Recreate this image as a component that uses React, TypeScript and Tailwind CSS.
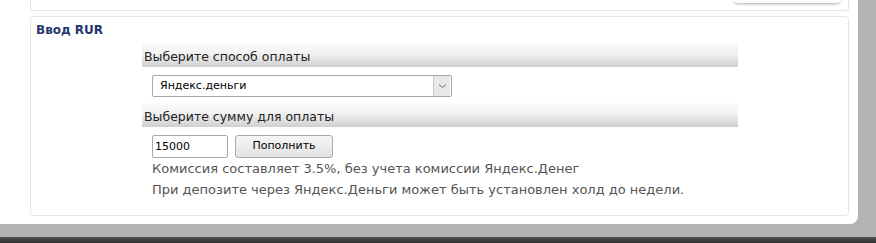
export default function App() {
  return (
    <div className="w-[876px] h-[243px] bg-[#b3b3b3] flex flex-col overflow-hidden" style={{ fontFamily: '"DejaVu Sans", Verdana, sans-serif' }}>
      <div className="w-[858px] h-[224px] bg-white rounded-br-[8px] pl-[30px] pr-[9px] overflow-hidden">
        {/* previous block, only its bottom is visible */}
        <div className="h-[11px] border-x border-b border-[#e6e6e6] rounded-b-[3px] flex justify-end pr-[8px]">
          <div className="w-[105px] h-[3px] rounded-b-[3px] bg-white shadow-[0_1px_3px_rgba(0,0,0,0.35)]" />
        </div>

        <div className="mt-[5px] h-[200px] border border-[#e6e6e6] rounded-[4px]">
          <div className="pl-[5px] pt-[6px] leading-[15px] text-[12px] font-bold text-[#22376b]">Ввод RUR</div>

          <div className="ml-[111px] mt-[5px] w-[596px]">
            <div className="h-[24px] bg-gradient-to-b from-[#fcfcfc] via-[#efefef] to-[#cfcfcf] pl-[2px] pt-[5px] text-[12.5px] leading-[17px] text-[#222]">
              Выберите способ оплаты
            </div>

            <div className="ml-[10px] mt-[8px] w-[300px] h-[22px] border border-[#a9a9a9] rounded-[2px] bg-white flex items-center">
              <span className="flex-1 pl-[7px] text-[11px] text-black">Яндекс.деньги</span>
              <div className="w-[17px] h-[20px] mr-[1px] bg-[#e8e8e8] border-l border-[#c8c8c8] flex items-center justify-center">
                <svg width="9" height="6" viewBox="0 0 9 6" fill="none">
                  <path d="M1 1.5 L4.5 4.5 L8 1.5" stroke="#666" strokeWidth="1" />
                </svg>
              </div>
            </div>

            <div className="mt-[6px] h-[24px] bg-gradient-to-b from-[#fcfcfc] via-[#efefef] to-[#cfcfcf] pl-[2px] pt-[5px] text-[12.5px] leading-[17px] text-[#222]">
              Выберите сумму для оплаты
            </div>

            <div className="ml-[10px] mt-[8px] flex gap-[7px]">
              <div className="w-[76px] h-[23px] border border-[#a9a9a9] rounded-[2px] bg-white pl-[2px] text-[11px] leading-[21px] text-black">15000</div>
              <button className="w-[98px] h-[23px] border border-[#a9a9a9] rounded-[3px] bg-gradient-to-b from-[#f6f6f6] to-[#e3e3e3] text-[11px] text-black">Пополнить</button>
            </div>

            <div className="ml-[10px] text-[13px] leading-[21px] text-[#555]">
              <div>Комиссия составляет 3.5%, без учета комиссии Яндекс.Денег</div>
              <div>При депозите через Яндекс.Деньги может быть установлен холд до недели.</div>
            </div>
          </div>
        </div>
      </div>
      <div className="flex-1" />
      <div className="h-[6px] bg-gradient-to-b from-[#555] to-[#2e2e2e]" />
    </div>
  )
}
